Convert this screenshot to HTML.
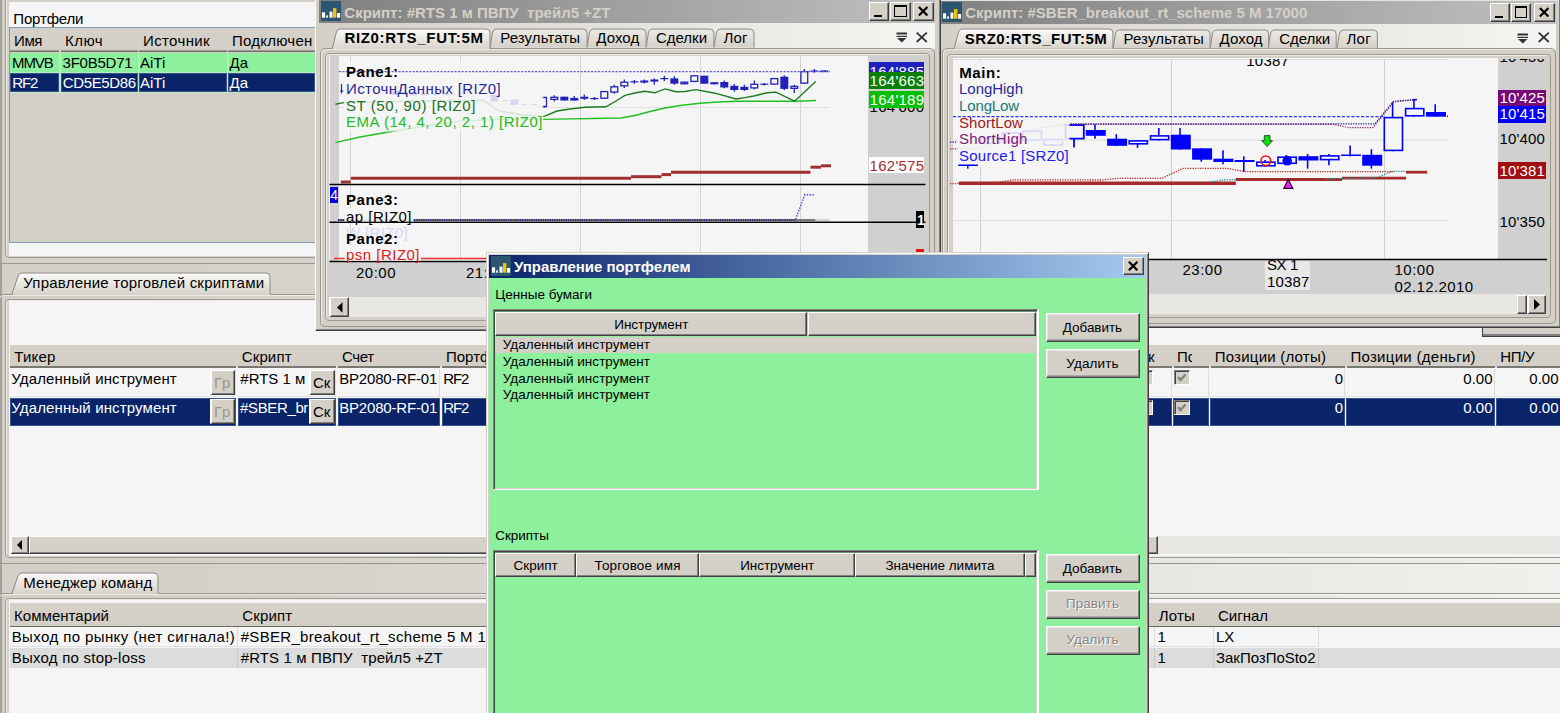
<!DOCTYPE html>
<html><head><meta charset="utf-8"><title>ui</title><style>
html,body{margin:0;padding:0;}
body{width:1560px;height:713px;overflow:hidden;background:linear-gradient(to right,#d4d0c8 0%,#d6d2ca 20%,#f1f0ed 100%);position:relative;font-family:"Liberation Sans",sans-serif;}
div,span.t,svg{position:absolute;box-sizing:border-box;}
span.t{white-space:pre;line-height:normal;}
.clip{overflow:hidden;}
</style></head><body>
<div style="left:0px;top:0px;width:2px;height:713px;background:#a5a29c;"></div>
<div style="left:-2px;top:-10px;width:322px;height:274px;border:1.6px solid #98958f;border-radius:5px;box-shadow:inset 1px 1px 0 rgba(255,255,255,.55);"></div>
<div style="left:5px;top:-10px;width:313px;height:268px;border:1.6px solid #9e9b95;border-radius:4px;box-shadow:inset 1px 1px 0 rgba(255,255,255,.55);"></div>
<div style="left:9px;top:2px;width:306px;height:254px;background:#f5f5f5;"></div>
<span class="t" style="left:13.30px;top:10.22px;font-size:15px;color:#000;letter-spacing:-0.166px;">Портфели</span>
<div style="left:9px;top:27px;width:307px;height:216px;background:#d4d0c8;border:1px solid #7f9db9;"></div>
<span class="t" style="left:14.00px;top:32.02px;font-size:15px;color:#000;letter-spacing:-0.405px;">Имя</span>
<div style="left:10px;top:50px;width:49px;height:1px;background:#9d9a94;"></div>
<div style="left:10px;top:51px;width:49px;height:1px;background:#6e6c68;"></div>
<span class="t" style="left:65.00px;top:32.02px;font-size:15px;color:#000;letter-spacing:0.443px;">Ключ</span>
<div style="left:61px;top:50px;width:77px;height:1px;background:#9d9a94;"></div>
<div style="left:61px;top:51px;width:77px;height:1px;background:#6e6c68;"></div>
<span class="t" style="left:143.00px;top:32.02px;font-size:15px;color:#000;letter-spacing:0.370px;">Источник</span>
<div style="left:139px;top:50px;width:88px;height:1px;background:#9d9a94;"></div>
<div style="left:139px;top:51px;width:88px;height:1px;background:#6e6c68;"></div>
<span class="t" style="left:232.00px;top:32.02px;font-size:15px;color:#000;letter-spacing:0.234px;">Подключен</span>
<div style="left:228px;top:50px;width:87px;height:1px;background:#9d9a94;"></div>
<div style="left:228px;top:51px;width:87px;height:1px;background:#6e6c68;"></div>
<div style="left:10px;top:53px;width:305px;height:19px;background:#8cf09c;"></div>
<div style="left:59px;top:53px;width:2px;height:19px;background:#a8f5b4;"></div>
<div style="left:138px;top:53px;width:2px;height:19px;background:#a8f5b4;"></div>
<div style="left:227px;top:53px;width:2px;height:19px;background:#a8f5b4;"></div>
<span class="t" style="left:12.00px;top:53.92px;font-size:15px;color:#000;letter-spacing:-1.101px;">MMVB</span>
<span class="t" style="left:62.50px;top:53.92px;font-size:15px;color:#000;letter-spacing:-0.214px;">3F0B5D71</span>
<span class="t" style="left:140.00px;top:53.92px;font-size:15px;color:#000;">AiTi</span>
<span class="t" style="left:229.50px;top:53.92px;font-size:15px;color:#000;">Да</span>
<div style="left:10px;top:72px;width:305px;height:20.8px;background:#b4efc0;"></div>
<div style="left:10px;top:73px;width:49px;height:19px;background:#0a246a;border:1px solid #3c5290;"></div>
<div style="left:61px;top:73px;width:77px;height:19px;background:#0a246a;border:1px solid #3c5290;"></div>
<div style="left:139px;top:73px;width:88px;height:19px;background:#0a246a;border:1px solid #3c5290;"></div>
<div style="left:228px;top:73px;width:87px;height:19px;background:#0a246a;border:1px solid #3c5290;"></div>
<span class="t" style="left:12.30px;top:73.83px;font-size:15px;color:#fff;letter-spacing:-1.113px;">RF2</span>
<span class="t" style="left:62.80px;top:73.83px;font-size:15px;color:#fff;letter-spacing:-0.359px;">CD5E5D86</span>
<span class="t" style="left:140.00px;top:73.83px;font-size:15px;color:#fff;">AiTi</span>
<span class="t" style="left:229.50px;top:73.83px;font-size:15px;color:#fff;">Да</span>
<div style="left:-2px;top:294px;width:1580px;height:269.7px;border:1.6px solid #98958f;border-radius:5px;box-shadow:inset 1px 1px 0 rgba(255,255,255,.55);"></div>
<div style="left:5px;top:299px;width:1571px;height:259.3px;border:1.6px solid #9e9b95;border-radius:4px;box-shadow:inset 1px 1px 0 rgba(255,255,255,.55);"></div>
<div style="left:9px;top:301px;width:1551px;height:254.6px;background:#f5f5f5;"></div>
<svg style="left:11px;top:272px" width="261" height="24" viewBox="-1 -1 261 24"><defs><linearGradient id="tg" x1="0" y1="0" x2="0" y2="1"><stop offset="0" stop-color="#fafaf9"/><stop offset="1" stop-color="#d8d4cc"/></linearGradient></defs><path d="M0 21 L6 3 Q7 0 10 0 L254 0 Q258 0 258 4 L258 21 Z" fill="url(#tg)" stroke="none"/><path d="M0 21 L6 3 Q7 0 10 0 L254 0 Q258 0 258 4 L258 21" fill="none" stroke="#8c8984" stroke-width="1"/></svg>
<span class="t" style="left:23.30px;top:273.93px;font-size:15px;color:#000;letter-spacing:0.222px;">Управление торговлей скриптами</span>
<div style="left:13px;top:294px;width:257px;height:1px;background:#d4d0c8;"></div>
<div style="left:10px;top:345px;width:1550px;height:22px;background:#d4d0c8;"></div>
<div style="left:10px;top:366.3px;width:1550px;height:1.7px;background:#7a7873;"></div>
<div style="left:236px;top:366px;width:2px;height:2px;background:#e4e2de;"></div>
<div style="left:336px;top:366px;width:2px;height:2px;background:#e4e2de;"></div>
<div style="left:440px;top:366px;width:2px;height:2px;background:#e4e2de;"></div>
<div style="left:1172px;top:366px;width:2px;height:2px;background:#e4e2de;"></div>
<div style="left:1209px;top:366px;width:2px;height:2px;background:#e4e2de;"></div>
<div style="left:1345px;top:366px;width:2px;height:2px;background:#e4e2de;"></div>
<div style="left:1495px;top:366px;width:2px;height:2px;background:#e4e2de;"></div>
<span class="t" style="left:14.20px;top:348.43px;font-size:15px;color:#000;letter-spacing:0.240px;">Тикер</span>
<span class="t" style="left:241.70px;top:348.43px;font-size:15px;color:#000;letter-spacing:0.148px;">Скрипт</span>
<span class="t" style="left:342.00px;top:348.43px;font-size:15px;color:#000;letter-spacing:-0.374px;">Счет</span>
<span class="t" style="left:446.00px;top:348.43px;font-size:15px;color:#000;">Портфель</span>
<div style="left:10px;top:369px;width:226px;height:28px;background:#f5f5f5;border-right:1px solid #dcdcdc;border-bottom:1px solid #e4e4e4;"></div>
<div style="left:238px;top:369px;width:98px;height:28px;background:#f5f5f5;border-right:1px solid #dcdcdc;border-bottom:1px solid #e4e4e4;"></div>
<div style="left:338px;top:369px;width:102px;height:28px;background:#f5f5f5;border-right:1px solid #dcdcdc;border-bottom:1px solid #e4e4e4;"></div>
<div style="left:442px;top:369px;width:730px;height:28px;background:#f5f5f5;border-right:1px solid #dcdcdc;border-bottom:1px solid #e4e4e4;"></div>
<div style="left:1173px;top:369px;width:36px;height:28px;background:#f5f5f5;border-right:1px solid #dcdcdc;border-bottom:1px solid #e4e4e4;"></div>
<div style="left:1210px;top:369px;width:135px;height:28px;background:#f5f5f5;border-right:1px solid #dcdcdc;border-bottom:1px solid #e4e4e4;"></div>
<div style="left:1346px;top:369px;width:149px;height:28px;background:#f5f5f5;border-right:1px solid #dcdcdc;border-bottom:1px solid #e4e4e4;"></div>
<div style="left:1496px;top:369px;width:66px;height:28px;background:#f5f5f5;border-right:1px solid #dcdcdc;border-bottom:1px solid #e4e4e4;"></div>
<div style="left:10px;top:398px;width:226px;height:28px;background:#0a246a;border:1px solid #3c5290;"></div>
<div style="left:238px;top:398px;width:98px;height:28px;background:#0a246a;border:1px solid #3c5290;"></div>
<div style="left:338px;top:398px;width:102px;height:28px;background:#0a246a;border:1px solid #3c5290;"></div>
<div style="left:442px;top:398px;width:730px;height:28px;background:#0a246a;border:1px solid #3c5290;"></div>
<div style="left:1173px;top:398px;width:36px;height:28px;background:#0a246a;border:1px solid #3c5290;"></div>
<div style="left:1210px;top:398px;width:135px;height:28px;background:#0a246a;border:1px solid #3c5290;"></div>
<div style="left:1346px;top:398px;width:149px;height:28px;background:#0a246a;border:1px solid #3c5290;"></div>
<div style="left:1496px;top:398px;width:66px;height:28px;background:#0a246a;border:1px solid #3c5290;"></div>
<span class="t" style="left:11.30px;top:370.43px;font-size:15px;color:#000;letter-spacing:0.140px;">Удаленный инструмент</span>
<span class="t" style="left:339.20px;top:370.43px;font-size:15px;color:#000;letter-spacing:-0.171px;">BP2080-RF-01</span>
<span class="t" style="left:443.30px;top:370.43px;font-size:15px;color:#000;letter-spacing:-1.113px;">RF2</span>
<span class="t" style="left:11.30px;top:399.43px;font-size:15px;color:#fff;letter-spacing:0.140px;">Удаленный инструмент</span>
<span class="t" style="left:339.20px;top:399.43px;font-size:15px;color:#fff;letter-spacing:-0.171px;">BP2080-RF-01</span>
<span class="t" style="left:443.30px;top:399.43px;font-size:15px;color:#fff;letter-spacing:-1.113px;">RF2</span>
<span class="t" style="left:240.30px;top:370.43px;font-size:15px;color:#000;letter-spacing:-0.008px;">#RTS 1 м</span>
<span class="t" style="left:240.00px;top:399.43px;font-size:15px;color:#fff;letter-spacing:-0.359px;">#SBER_br</span>
<div style="left:210px;top:370px;width:25px;height:25px;background:#d4d0c8;border:1px solid;border-color:#fff #404040 #404040 #fff;border-left-width:2px;border-top-width:1.6px;box-shadow:inset -1px -1px 0 #808080;"></div>
<span class="t" style="left:214.00px;top:374.43px;font-size:15px;color:#9a968f;letter-spacing:0.689px;">Гр</span>
<div style="left:309px;top:370px;width:26px;height:25px;background:#d4d0c8;border:1px solid;border-color:#fff #404040 #404040 #fff;border-left-width:2px;border-top-width:1.6px;box-shadow:inset -1px -1px 0 #808080;"></div>
<span class="t" style="left:313.00px;top:374.43px;font-size:15px;color:#000;letter-spacing:-0.198px;">Ск</span>
<div style="left:210px;top:399px;width:25px;height:25px;background:#d4d0c8;border:1px solid;border-color:#fff #404040 #404040 #fff;border-left-width:2px;border-top-width:1.6px;box-shadow:inset -1px -1px 0 #808080;"></div>
<span class="t" style="left:214.00px;top:403.43px;font-size:15px;color:#9a968f;letter-spacing:0.689px;">Гр</span>
<div style="left:309px;top:399px;width:26px;height:25px;background:#d4d0c8;border:1px solid;border-color:#fff #404040 #404040 #fff;border-left-width:2px;border-top-width:1.6px;box-shadow:inset -1px -1px 0 #808080;"></div>
<span class="t" style="left:313.00px;top:403.43px;font-size:15px;color:#000;letter-spacing:-0.198px;">Ск</span>
<span class="t" style="left:1334.66px;top:370.43px;font-size:15px;color:#000;">0</span>
<span class="t" style="left:1463.31px;top:370.43px;font-size:15px;color:#000;">0.00</span>
<span class="t" style="left:1529.31px;top:370.43px;font-size:15px;color:#000;">0.00</span>
<span class="t" style="left:1334.66px;top:399.43px;font-size:15px;color:#fff;">0</span>
<span class="t" style="left:1463.31px;top:399.43px;font-size:15px;color:#fff;">0.00</span>
<span class="t" style="left:1529.31px;top:399.43px;font-size:15px;color:#fff;">0.00</span>
<span class="t" style="left:1148.00px;top:348.43px;font-size:15px;color:#000;">к</span>
<div class="clip" style="left:1177px;top:345px;width:15px;height:22px"><span class="t" style="left:0;top:3.4px;font-size:15px">По</span></div>
<span class="t" style="left:1214.70px;top:348.43px;font-size:15px;color:#000;letter-spacing:0.228px;">Позиции (лоты)</span>
<span class="t" style="left:1350.40px;top:348.43px;font-size:15px;color:#000;letter-spacing:0.296px;">Позиции (деньги)</span>
<span class="t" style="left:1500.30px;top:348.43px;font-size:15px;color:#000;letter-spacing:-0.327px;">НП/У</span>
<div style="left:1174.2px;top:370.3px;width:15.5px;height:15px;background:#d4d0c8;border:1px solid;border-color:#808080 #fff #fff #808080;box-shadow:inset 1px 1px 0 #404040;"></div>
<svg style="left:1177.2px;top:373.3px" width="10" height="10"><path d="M1 4 L3.5 7 L8.5 1.5" stroke="#808080" stroke-width="2.3" fill="none"/></svg>
<div style="left:1174.2px;top:400px;width:15.5px;height:15px;background:#d4d0c8;border:1px solid;border-color:#808080 #fff #fff #808080;box-shadow:inset 1px 1px 0 #404040;"></div>
<svg style="left:1177.2px;top:403px" width="10" height="10"><path d="M1 4 L3.5 7 L8.5 1.5" stroke="#808080" stroke-width="2.3" fill="none"/></svg>
<div style="left:1137px;top:370px;width:15.5px;height:15px;background:#d4d0c8;border:1px solid;border-color:#808080 #fff #fff #808080;box-shadow:inset 1px 1px 0 #404040;"></div>
<svg style="left:1140px;top:373px" width="10" height="10"><path d="M1 4 L3.5 7 L8.5 1.5" stroke="#808080" stroke-width="2.3" fill="none"/></svg>
<div style="left:1137px;top:400px;width:15.5px;height:15px;background:#d4d0c8;border:1px solid;border-color:#808080 #fff #fff #808080;box-shadow:inset 1px 1px 0 #404040;"></div>
<svg style="left:1140px;top:403px" width="10" height="10"><path d="M1 4 L3.5 7 L8.5 1.5" stroke="#808080" stroke-width="2.3" fill="none"/></svg>
<div style="left:1482.2px;top:326px;width:80px;height:10.8px;background:#d4d0c8;border-left:1.2px solid #404040;border-bottom:1px solid #404040;box-shadow:inset 0 -2px 0 #808080;"></div>
<div style="left:10px;top:535.5px;width:1550px;height:18.2px;background:#e9e7e3;"></div>
<div style="left:29px;top:535.5px;width:1129px;height:18.2px;background:#d4d0c8;border:1px solid;border-color:#fff #404040 #404040 #fff;box-shadow:inset -1px -1px 0 #808080;"></div>
<div style="left:10px;top:535.5px;width:19.3px;height:18.2px;background:#d4d0c8;border:1px solid;border-color:#fff #404040 #404040 #fff;border-left-width:2px;border-top-width:1.6px;box-shadow:inset -1px -1px 0 #808080;"></div>
<svg style="left:15.5px;top:539.6px" width="8" height="10"><path d="M6 0 L6 10 L1 5 Z" fill="#000"/></svg>
<div style="left:-2px;top:593px;width:1580px;height:140px;border:1.6px solid #98958f;border-radius:5px;box-shadow:inset 1px 1px 0 rgba(255,255,255,.55);"></div>
<div style="left:5px;top:598.4px;width:1571px;height:140px;border:1.6px solid #9e9b95;border-radius:4px;box-shadow:inset 1px 1px 0 rgba(255,255,255,.55);"></div>
<div style="left:9px;top:600.4px;width:1551px;height:120px;background:#f5f5f5;"></div>
<svg style="left:11px;top:572px" width="149" height="23" viewBox="-1 -1 149 23"><defs><linearGradient id="tg" x1="0" y1="0" x2="0" y2="1"><stop offset="0" stop-color="#fafaf9"/><stop offset="1" stop-color="#d8d4cc"/></linearGradient></defs><path d="M0 20 L6 3 Q7 0 10 0 L142 0 Q146 0 146 4 L146 20 Z" fill="url(#tg)" stroke="none"/><path d="M0 20 L6 3 Q7 0 10 0 L142 0 Q146 0 146 4 L146 20" fill="none" stroke="#8c8984" stroke-width="1"/></svg>
<span class="t" style="left:23.30px;top:574.12px;font-size:15px;color:#000;letter-spacing:0.086px;">Менеджер команд</span>
<div style="left:13px;top:593px;width:145px;height:1px;background:#d4d0c8;"></div>
<div style="left:10px;top:603px;width:1550px;height:23px;background:#d4d0c8;"></div>
<div style="left:10px;top:625.6px;width:1550px;height:1.5px;background:#6e6c68;"></div>
<span class="t" style="left:14.00px;top:606.82px;font-size:15px;color:#000;letter-spacing:0.048px;">Комментарий</span>
<span class="t" style="left:242.30px;top:606.82px;font-size:15px;color:#000;letter-spacing:0.148px;">Скрипт</span>
<span class="t" style="left:1158.80px;top:606.82px;font-size:15px;color:#000;letter-spacing:0.123px;">Лоты</span>
<span class="t" style="left:1218.00px;top:606.82px;font-size:15px;color:#000;letter-spacing:-0.010px;">Сигнал</span>
<div style="left:10px;top:627px;width:1550px;height:20px;background:#f5f5f5;"></div>
<div style="left:10px;top:648px;width:1550px;height:20px;background:#dcdcdc;"></div>
<div style="left:237px;top:627px;width:1px;height:20px;background:#dcdcdc;"></div>
<div style="left:237px;top:648px;width:1px;height:20px;background:#c8c8c8;"></div>
<div style="left:1154px;top:627px;width:1px;height:20px;background:#dcdcdc;"></div>
<div style="left:1154px;top:648px;width:1px;height:20px;background:#c8c8c8;"></div>
<div style="left:1213px;top:627px;width:1px;height:20px;background:#dcdcdc;"></div>
<div style="left:1213px;top:648px;width:1px;height:20px;background:#c8c8c8;"></div>
<div style="left:1318px;top:627px;width:1px;height:20px;background:#dcdcdc;"></div>
<div style="left:1318px;top:648px;width:1px;height:20px;background:#c8c8c8;"></div>
<div style="left:10px;top:646px;width:1308px;height:1px;background:#e0e0e0;"></div>
<span class="t" style="left:11.70px;top:628.12px;font-size:15px;color:#000;letter-spacing:0.400px;">Выход по рынку (нет сигнала!)</span>
<span class="t" style="left:11.70px;top:649.12px;font-size:15px;color:#000;letter-spacing:0.239px;">Выход по stop-loss</span>
<span class="t" style="left:240.70px;top:628.12px;font-size:15px;color:#000;letter-spacing:0.314px;">#SBER_breakout_rt_scheme 5 M 17000</span>
<span class="t" style="left:240.70px;top:649.12px;font-size:15px;color:#000;letter-spacing:0.122px;">#RTS 1 м ПВПУ  трейл5 +ZT</span>
<span class="t" style="left:1157.50px;top:628.12px;font-size:15px;color:#000;">1</span>
<span class="t" style="left:1157.50px;top:649.12px;font-size:15px;color:#000;">1</span>
<span class="t" style="left:1216.00px;top:628.12px;font-size:15px;color:#000;">LX</span>
<span class="t" style="left:1216.00px;top:649.12px;font-size:15px;color:#000;letter-spacing:-0.023px;">ЗакПозПоSto2</span>
<div style="left:937.5px;top:-2px;width:623.0px;height:329.8px;background:#d4d0c8;border:1.3px solid;border-color:#fff #404040 #404040 #fbfbfb;border-left-width:1.9px;box-shadow:inset -1px -1px 0 #808080;"></div>
<div style="left:938.8px;top:0px;width:619.2px;height:0.9px;background:#e6e4df;"></div>
<div style="left:940.8px;top:0.9px;width:615.2px;height:22.8px;background:linear-gradient(to right,#808080,#c0c0c0);"></div>
<svg style="left:942px;top:1.8px" width="20" height="20" viewBox="0 0 20 20"><rect width="20" height="20" fill="#2b5570"/><rect x="1" y="11.3" width="3.1" height="5.4" fill="#fff"/><rect x="5.1" y="14.4" width="1.8" height="2.3" fill="#fff"/><rect x="8.5" y="10.6" width="3" height="6.1" fill="#fff"/><rect x="12" y="7.1" width="3.4" height="9.6" fill="#f5c400"/><rect x="16.1" y="12" width="3" height="4.7" fill="#fff"/></svg>
<span class="t" style="left:965.30px;top:4.42px;font-size:15px;color:#d4d0c8;letter-spacing:-0.011px;font-weight:bold;">Скрипт: #SBER_breakout_rt_scheme 5 M 17000</span>
<div style="left:1490px;top:2.8px;width:19.5px;height:19px;background:#d4d0c8;border:1px solid;border-color:#fff #404040 #404040 #fff;box-shadow:inset -1px -1px 0 #808080;"></div>
<div style="left:1495px;top:15.8px;width:8px;height:2.5px;background:#000;"></div>
<div style="left:1510.9px;top:2.8px;width:20.5px;height:19px;background:#d4d0c8;border:1px solid;border-color:#fff #404040 #404040 #fff;box-shadow:inset -1px -1px 0 #808080;"></div>
<div style="left:1514.9px;top:5.8px;width:12.5px;height:12px;border:1px solid #000;border-top:2.5px solid #000;"></div>
<div style="left:1533.8px;top:2.8px;width:20.8px;height:19px;background:#d4d0c8;border:1px solid;border-color:#fff #404040 #404040 #fff;box-shadow:inset -1px -1px 0 #808080;"></div>
<svg style="left:1533.8px;top:2.8px" width="20.8" height="19"><path d="M5.9 5.0 L14.4 13.5 M14.4 5.0 L5.9 13.5" stroke="#000" stroke-width="2.2" fill="none"/></svg>
<div style="left:940.8px;top:23.7px;width:615.2px;height:26px;background:linear-gradient(to right,#d4d0c8 0%,#f5f5f3 100%);"></div>
<div style="left:941.8px;top:48.44px;width:613.9000000000001px;height:275.36px;background:#d4d0c8;border:1.6px solid #98958f;border-radius:5px;box-shadow:inset 1px 1px 0 rgba(255,255,255,.55);"></div>
<div style="left:946.8px;top:53.54px;width:603.9000000000001px;height:264.26px;background:#d4d0c8;border:1.6px solid #9e9b95;border-radius:4px;box-shadow:inset 1px 1px 0 rgba(255,255,255,.55);"></div>
<svg style="left:1335.5px;top:29.299999999999997px" width="43.40000000000009" height="21.14" viewBox="-1 -1 43.40000000000009 21.14"><defs><linearGradient id="tga" x1="0" y1="0" x2="0" y2="1"><stop offset="0" stop-color="#fbfbfa"/><stop offset="1" stop-color="#d8d4cc"/></linearGradient><linearGradient id="tgi" x1="0" y1="0" x2="0" y2="1"><stop offset="0" stop-color="#eceae6"/><stop offset="1" stop-color="#d4d0c8"/></linearGradient></defs><path d="M0 18.14 L2.6 3 Q3.6 0 6.6 0 L36.40000000000009 0 Q40.40000000000009 0 40.40000000000009 4 L40.40000000000009 18.14 Z" fill="url(#tgi)" stroke="none"/><path d="M0 18.14 L2.6 3 Q3.6 0 6.6 0 L36.40000000000009 0 Q40.40000000000009 0 40.40000000000009 4 L40.40000000000009 18.14" fill="none" stroke="#8c8984" stroke-width="1"/></svg>
<span class="t" style="left:1346.50px;top:30.02px;font-size:15px;color:#000;letter-spacing:0.281px;">Лог</span>
<svg style="left:1267.3px;top:29.299999999999997px" width="71.20000000000005" height="21.14" viewBox="-1 -1 71.20000000000005 21.14"><defs><linearGradient id="tga" x1="0" y1="0" x2="0" y2="1"><stop offset="0" stop-color="#fbfbfa"/><stop offset="1" stop-color="#d8d4cc"/></linearGradient><linearGradient id="tgi" x1="0" y1="0" x2="0" y2="1"><stop offset="0" stop-color="#eceae6"/><stop offset="1" stop-color="#d4d0c8"/></linearGradient></defs><path d="M0 18.14 L2.6 3 Q3.6 0 6.6 0 L64.20000000000005 0 Q68.20000000000005 0 68.20000000000005 4 L68.20000000000005 18.14 Z" fill="url(#tgi)" stroke="none"/><path d="M0 18.14 L2.6 3 Q3.6 0 6.6 0 L64.20000000000005 0 Q68.20000000000005 0 68.20000000000005 4 L68.20000000000005 18.14" fill="none" stroke="#8c8984" stroke-width="1"/></svg>
<span class="t" style="left:1279.20px;top:30.02px;font-size:15px;color:#000;letter-spacing:-0.021px;">Сделки</span>
<svg style="left:1208.6px;top:29.299999999999997px" width="61.700000000000045" height="21.14" viewBox="-1 -1 61.700000000000045 21.14"><defs><linearGradient id="tga" x1="0" y1="0" x2="0" y2="1"><stop offset="0" stop-color="#fbfbfa"/><stop offset="1" stop-color="#d8d4cc"/></linearGradient><linearGradient id="tgi" x1="0" y1="0" x2="0" y2="1"><stop offset="0" stop-color="#eceae6"/><stop offset="1" stop-color="#d4d0c8"/></linearGradient></defs><path d="M0 18.14 L2.6 3 Q3.6 0 6.6 0 L54.700000000000045 0 Q58.700000000000045 0 58.700000000000045 4 L58.700000000000045 18.14 Z" fill="url(#tgi)" stroke="none"/><path d="M0 18.14 L2.6 3 Q3.6 0 6.6 0 L54.700000000000045 0 Q58.700000000000045 0 58.700000000000045 4 L58.700000000000045 18.14" fill="none" stroke="#8c8984" stroke-width="1"/></svg>
<span class="t" style="left:1219.60px;top:30.02px;font-size:15px;color:#000;letter-spacing:0.080px;">Доход</span>
<svg style="left:1111.5px;top:29.299999999999997px" width="100.09999999999991" height="21.14" viewBox="-1 -1 100.09999999999991 21.14"><defs><linearGradient id="tga" x1="0" y1="0" x2="0" y2="1"><stop offset="0" stop-color="#fbfbfa"/><stop offset="1" stop-color="#d8d4cc"/></linearGradient><linearGradient id="tgi" x1="0" y1="0" x2="0" y2="1"><stop offset="0" stop-color="#eceae6"/><stop offset="1" stop-color="#d4d0c8"/></linearGradient></defs><path d="M0 18.14 L2.6 3 Q3.6 0 6.6 0 L93.09999999999991 0 Q97.09999999999991 0 97.09999999999991 4 L97.09999999999991 18.14 Z" fill="url(#tgi)" stroke="none"/><path d="M0 18.14 L2.6 3 Q3.6 0 6.6 0 L93.09999999999991 0 Q97.09999999999991 0 97.09999999999991 4 L97.09999999999991 18.14" fill="none" stroke="#8c8984" stroke-width="1"/></svg>
<span class="t" style="left:1123.50px;top:30.02px;font-size:15px;color:#000;letter-spacing:0.130px;">Результаты</span>
<svg style="left:952.5px;top:28.4px" width="162.0" height="22.64" viewBox="-1 -1 162.0 22.64"><defs><linearGradient id="tga" x1="0" y1="0" x2="0" y2="1"><stop offset="0" stop-color="#fbfbfa"/><stop offset="1" stop-color="#d8d4cc"/></linearGradient><linearGradient id="tgi" x1="0" y1="0" x2="0" y2="1"><stop offset="0" stop-color="#eceae6"/><stop offset="1" stop-color="#d4d0c8"/></linearGradient></defs><path d="M0 19.64 L4.5 3 Q5.5 0 8.5 0 L155.0 0 Q159.0 0 159.0 4 L159.0 19.64 Z" fill="url(#tga)" stroke="none"/><path d="M0 19.64 L4.5 3 Q5.5 0 8.5 0 L155.0 0 Q159.0 0 159.0 4 L159.0 19.64" fill="none" stroke="#8c8984" stroke-width="1"/></svg>
<span class="t" style="left:964.80px;top:30.02px;font-size:15px;color:#000;letter-spacing:0.499px;font-weight:bold;">SRZ0:RTS_FUT:5M</span>
<svg style="left:1517px;top:32.9px" width="12" height="11"><rect x="0.5" y="0.5" width="10.5" height="2" fill="#333"/><rect x="0.5" y="3.8" width="10.5" height="1.2" fill="#333"/><path d="M1 6 L10.5 6 L5.75 10.5 Z" fill="#333"/></svg>
<svg style="left:1538px;top:32.4px" width="12" height="11"><path d="M0.7 0.7 L10.8 10 M10.8 0.7 L0.7 10" stroke="#333" stroke-width="1.8" fill="none"/></svg>
<div style="left:315.4px;top:-2px;width:625.2px;height:332.8px;background:#d4d0c8;border:1.3px solid;border-color:#fff #404040 #404040 #fbfbfb;border-left-width:1.9px;box-shadow:inset -1px -1px 0 #808080;"></div>
<div style="left:319.3px;top:0px;width:615.8px;height:22.8px;background:linear-gradient(to right,#808080,#c0c0c0);"></div>
<svg style="left:321px;top:0.9px" width="20" height="20" viewBox="0 0 20 20"><rect width="20" height="20" fill="#2b5570"/><rect x="1" y="11.3" width="3.1" height="5.4" fill="#fff"/><rect x="5.1" y="14.4" width="1.8" height="2.3" fill="#fff"/><rect x="8.5" y="10.6" width="3" height="6.1" fill="#fff"/><rect x="12" y="7.1" width="3.4" height="9.6" fill="#f5c400"/><rect x="16.1" y="12" width="3" height="4.7" fill="#fff"/></svg>
<span class="t" style="left:344.30px;top:3.53px;font-size:15px;color:#d4d0c8;letter-spacing:0.005px;font-weight:bold;">Скрипт: #RTS 1 м ПВПУ  трейл5 +ZT</span>
<div style="left:869.1px;top:1.9px;width:19.5px;height:19px;background:#d4d0c8;border:1px solid;border-color:#fff #404040 #404040 #fff;box-shadow:inset -1px -1px 0 #808080;"></div>
<div style="left:874.1px;top:14.899999999999999px;width:8px;height:2.5px;background:#000;"></div>
<div style="left:890.0px;top:1.9px;width:20.5px;height:19px;background:#d4d0c8;border:1px solid;border-color:#fff #404040 #404040 #fff;box-shadow:inset -1px -1px 0 #808080;"></div>
<div style="left:894.0px;top:4.9px;width:12.5px;height:12px;border:1px solid #000;border-top:2.5px solid #000;"></div>
<div style="left:912.9px;top:1.9px;width:20.8px;height:19px;background:#d4d0c8;border:1px solid;border-color:#fff #404040 #404040 #fff;box-shadow:inset -1px -1px 0 #808080;"></div>
<svg style="left:912.9px;top:1.9px" width="20.8" height="19"><path d="M5.9 5.0 L14.4 13.5 M14.4 5.0 L5.9 13.5" stroke="#000" stroke-width="2.2" fill="none"/></svg>
<div style="left:319.3px;top:22.8px;width:615.8px;height:26px;background:linear-gradient(to right,#d4d0c8 0%,#f5f5f3 100%);"></div>
<div style="left:320.3px;top:47.9px;width:614.5px;height:278.90000000000003px;background:#d4d0c8;border:1.6px solid #98958f;border-radius:5px;box-shadow:inset 1px 1px 0 rgba(255,255,255,.55);"></div>
<div style="left:325.3px;top:53.0px;width:604.5px;height:267.8px;background:#d4d0c8;border:1.6px solid #9e9b95;border-radius:4px;box-shadow:inset 1px 1px 0 rgba(255,255,255,.55);"></div>
<svg style="left:712.7px;top:28.4px" width="43.0" height="21.5" viewBox="-1 -1 43.0 21.5"><defs><linearGradient id="tga" x1="0" y1="0" x2="0" y2="1"><stop offset="0" stop-color="#fbfbfa"/><stop offset="1" stop-color="#d8d4cc"/></linearGradient><linearGradient id="tgi" x1="0" y1="0" x2="0" y2="1"><stop offset="0" stop-color="#eceae6"/><stop offset="1" stop-color="#d4d0c8"/></linearGradient></defs><path d="M0 18.5 L2.6 3 Q3.6 0 6.6 0 L36.0 0 Q40.0 0 40.0 4 L40.0 18.5 Z" fill="url(#tgi)" stroke="none"/><path d="M0 18.5 L2.6 3 Q3.6 0 6.6 0 L36.0 0 Q40.0 0 40.0 4 L40.0 18.5" fill="none" stroke="#8c8984" stroke-width="1"/></svg>
<span class="t" style="left:723.40px;top:29.12px;font-size:15px;color:#000;letter-spacing:0.247px;">Лог</span>
<svg style="left:644.8px;top:28.4px" width="70.90000000000009" height="21.5" viewBox="-1 -1 70.90000000000009 21.5"><defs><linearGradient id="tga" x1="0" y1="0" x2="0" y2="1"><stop offset="0" stop-color="#fbfbfa"/><stop offset="1" stop-color="#d8d4cc"/></linearGradient><linearGradient id="tgi" x1="0" y1="0" x2="0" y2="1"><stop offset="0" stop-color="#eceae6"/><stop offset="1" stop-color="#d4d0c8"/></linearGradient></defs><path d="M0 18.5 L2.6 3 Q3.6 0 6.6 0 L63.90000000000009 0 Q67.90000000000009 0 67.90000000000009 4 L67.90000000000009 18.5 Z" fill="url(#tgi)" stroke="none"/><path d="M0 18.5 L2.6 3 Q3.6 0 6.6 0 L63.90000000000009 0 Q67.90000000000009 0 67.90000000000009 4 L67.90000000000009 18.5" fill="none" stroke="#8c8984" stroke-width="1"/></svg>
<span class="t" style="left:656.00px;top:29.12px;font-size:15px;color:#000;letter-spacing:-0.021px;">Сделки</span>
<svg style="left:585.7px;top:28.4px" width="62.09999999999991" height="21.5" viewBox="-1 -1 62.09999999999991 21.5"><defs><linearGradient id="tga" x1="0" y1="0" x2="0" y2="1"><stop offset="0" stop-color="#fbfbfa"/><stop offset="1" stop-color="#d8d4cc"/></linearGradient><linearGradient id="tgi" x1="0" y1="0" x2="0" y2="1"><stop offset="0" stop-color="#eceae6"/><stop offset="1" stop-color="#d4d0c8"/></linearGradient></defs><path d="M0 18.5 L2.6 3 Q3.6 0 6.6 0 L55.09999999999991 0 Q59.09999999999991 0 59.09999999999991 4 L59.09999999999991 18.5 Z" fill="url(#tgi)" stroke="none"/><path d="M0 18.5 L2.6 3 Q3.6 0 6.6 0 L55.09999999999991 0 Q59.09999999999991 0 59.09999999999991 4 L59.09999999999991 18.5" fill="none" stroke="#8c8984" stroke-width="1"/></svg>
<span class="t" style="left:596.30px;top:29.12px;font-size:15px;color:#000;letter-spacing:0.080px;">Доход</span>
<svg style="left:488.6px;top:28.4px" width="100.10000000000002" height="21.5" viewBox="-1 -1 100.10000000000002 21.5"><defs><linearGradient id="tga" x1="0" y1="0" x2="0" y2="1"><stop offset="0" stop-color="#fbfbfa"/><stop offset="1" stop-color="#d8d4cc"/></linearGradient><linearGradient id="tgi" x1="0" y1="0" x2="0" y2="1"><stop offset="0" stop-color="#eceae6"/><stop offset="1" stop-color="#d4d0c8"/></linearGradient></defs><path d="M0 18.5 L2.6 3 Q3.6 0 6.6 0 L93.10000000000002 0 Q97.10000000000002 0 97.10000000000002 4 L97.10000000000002 18.5 Z" fill="url(#tgi)" stroke="none"/><path d="M0 18.5 L2.6 3 Q3.6 0 6.6 0 L93.10000000000002 0 Q97.10000000000002 0 97.10000000000002 4 L97.10000000000002 18.5" fill="none" stroke="#8c8984" stroke-width="1"/></svg>
<span class="t" style="left:500.20px;top:29.12px;font-size:15px;color:#000;letter-spacing:0.100px;">Результаты</span>
<svg style="left:331px;top:27.5px" width="161" height="23.0" viewBox="-1 -1 161 23.0"><defs><linearGradient id="tga" x1="0" y1="0" x2="0" y2="1"><stop offset="0" stop-color="#fbfbfa"/><stop offset="1" stop-color="#d8d4cc"/></linearGradient><linearGradient id="tgi" x1="0" y1="0" x2="0" y2="1"><stop offset="0" stop-color="#eceae6"/><stop offset="1" stop-color="#d4d0c8"/></linearGradient></defs><path d="M0 20.0 L4.5 3 Q5.5 0 8.5 0 L154 0 Q158 0 158 4 L158 20.0 Z" fill="url(#tga)" stroke="none"/><path d="M0 20.0 L4.5 3 Q5.5 0 8.5 0 L154 0 Q158 0 158 4 L158 20.0" fill="none" stroke="#8c8984" stroke-width="1"/></svg>
<span class="t" style="left:344.40px;top:29.12px;font-size:15px;color:#000;letter-spacing:0.675px;font-weight:bold;">RIZ0:RTS_FUT:5M</span>
<svg style="left:895.5px;top:32px" width="12" height="11"><rect x="0.5" y="0.5" width="10.5" height="2" fill="#333"/><rect x="0.5" y="3.8" width="10.5" height="1.2" fill="#333"/><path d="M1 6 L10.5 6 L5.75 10.5 Z" fill="#333"/></svg>
<svg style="left:916px;top:31.5px" width="12" height="11"><path d="M0.7 0.7 L10.8 10 M10.8 0.7 L0.7 10" stroke="#333" stroke-width="1.8" fill="none"/></svg>
<div style="left:329.3px;top:56px;width:596.2px;height:261px;background:#f5f5f5;"></div>
<div style="left:329.5px;top:56px;width:9px;height:206px;background:#d0d0d0;"></div>
<div style="left:868.3px;top:56px;width:57.2px;height:206px;background:#d0d0d0;"></div>
<div style="left:329.3px;top:262px;width:596.2px;height:34.8px;background:#d0d0d0;"></div>
<div style="left:329.3px;top:296.8px;width:596.2px;height:20.2px;background:#e9e7e3;"></div>
<div style="left:329.3px;top:297.3px;width:19.5px;height:19.7px;background:#d4d0c8;border:1px solid;border-color:#fff #404040 #404040 #fff;border-left-width:2px;border-top-width:1.6px;box-shadow:inset -1px -1px 0 #808080;"></div>
<svg style="left:335.5px;top:301.5px" width="8" height="11"><path d="M6.5 0.3 L6.5 10.7 L1 5.5 Z" fill="#000"/></svg>
<svg style="left:0;top:0" width="940" height="330" viewBox="0 0 940 330"><line x1="350.5" y1="56" x2="350.5" y2="262" stroke="#d4d4d4" stroke-width="1"/><line x1="460.5" y1="56" x2="460.5" y2="262" stroke="#d4d4d4" stroke-width="1"/><line x1="580.5" y1="56" x2="580.5" y2="262" stroke="#d4d4d4" stroke-width="1"/><line x1="700.5" y1="56" x2="700.5" y2="262" stroke="#d4d4d4" stroke-width="1"/><line x1="800.5" y1="56" x2="800.5" y2="262" stroke="#d4d4d4" stroke-width="1"/><line x1="339" y1="107.5" x2="830" y2="107.5" stroke="#e2e2e2" stroke-width="1"/><polyline fill="none" stroke="#22c022" stroke-width="1.4" points="335.4,142.6 360,137 400,130 463,120.7 500,119.6 543,119.4 621,118 636,115.3 650,111.5 665,108 682,105.3 700,103.2 718,102 736,101.2 795,101.2 816,100.5"/><polyline fill="none" stroke="#1e7a1e" stroke-width="1.4" points="335.4,104.3 343.4,102.6"/><polyline fill="none" stroke="#1e7a1e" stroke-width="1.4" points="544.3,116.3 557,111 570,109 585,107.3 606,106.8 616,101 625,95.3 636,92.7 645,91.2 654.7,92.8 665,88.9 676,91.8 685,91.5 696,89.6 715,93.2 736,99 745,97.6 755,95.8 767,92.8 776,92.1 794.6,101.2 815.7,81.6"/><polyline fill="none" stroke="#1e7a1e" stroke-width="1.3" points="343.4,102.6 420,101 484,100.5 499,111 520,114.5 544.3,116.3"/><line x1="554.3" y1="95.2" x2="554.3" y2="101.5" stroke="#2222bb" stroke-width="1.3"/><rect x="550.9" y="97.3" width="6.8" height="2.1" fill="#f5f5f5" stroke="#2222bb" stroke-width="1.3"/><line x1="564.3" y1="96.7" x2="564.3" y2="100.5" stroke="#2222bb" stroke-width="1.3"/><rect x="560.3" y="96.7" width="8" height="3.8" fill="#2222bb"/><line x1="574.3" y1="95.9" x2="574.3" y2="100.5" stroke="#2222bb" stroke-width="1.3"/><rect x="570.9" y="98.6" width="6.8" height="1.3" fill="#f5f5f5" stroke="#2222bb" stroke-width="1.3"/><line x1="584.3" y1="94.6" x2="584.3" y2="100" stroke="#2222bb" stroke-width="1.3"/><rect x="580.3" y="96.7" width="8" height="2.1" fill="#2222bb"/><line x1="594.3" y1="97" x2="594.3" y2="100" stroke="#2222bb" stroke-width="1.3"/><rect x="590.3" y="98" width="8" height="1.2" fill="#2222bb"/><line x1="604.3" y1="91" x2="604.3" y2="98.8" stroke="#2222bb" stroke-width="1.3"/><rect x="600.9" y="91.6" width="6.8" height="6.6" fill="#f5f5f5" stroke="#2222bb" stroke-width="1.3"/><line x1="614.3" y1="84.7" x2="614.3" y2="93.8" stroke="#2222bb" stroke-width="1.3"/><rect x="610.9" y="86.8" width="6.8" height="5.3" fill="#f5f5f5" stroke="#2222bb" stroke-width="1.3"/><line x1="624.3" y1="79.5" x2="624.3" y2="87.9" stroke="#2222bb" stroke-width="1.3"/><rect x="620.9" y="82.19999999999999" width="6.8" height="3.6" fill="#f5f5f5" stroke="#2222bb" stroke-width="1.3"/><line x1="634.3" y1="79.9" x2="634.3" y2="83.7" stroke="#2222bb" stroke-width="1.3"/><rect x="630.3" y="81.2" width="8" height="1.2" fill="#2222bb"/><line x1="644.3" y1="79.5" x2="644.3" y2="83.5" stroke="#2222bb" stroke-width="1.3"/><rect x="640.3" y="80.5" width="8" height="2.1" fill="#2222bb"/><line x1="654.3" y1="78.4" x2="654.3" y2="84.7" stroke="#2222bb" stroke-width="1.3"/><rect x="650.3" y="79.5" width="8" height="2.1" fill="#2222bb"/><line x1="664.3" y1="75.7" x2="664.3" y2="81.1" stroke="#2222bb" stroke-width="1.3"/><rect x="660.3" y="78" width="8" height="1.2" fill="#2222bb"/><line x1="674.3" y1="76.3" x2="674.3" y2="84.7" stroke="#2222bb" stroke-width="1.3"/><rect x="670.3" y="78.4" width="8" height="5.3" fill="#2222bb"/><line x1="684.3" y1="81.6" x2="684.3" y2="84.3" stroke="#2222bb" stroke-width="1.3"/><rect x="680.9" y="82.19999999999999" width="6.8" height="1.5" fill="#f5f5f5" stroke="#2222bb" stroke-width="1.3"/><line x1="694.3" y1="75.2" x2="694.3" y2="82" stroke="#2222bb" stroke-width="1.3"/><rect x="690.9" y="75.8" width="6.8" height="5.6" fill="#f5f5f5" stroke="#2222bb" stroke-width="1.3"/><line x1="704.3" y1="75.7" x2="704.3" y2="83.7" stroke="#2222bb" stroke-width="1.3"/><rect x="700.3" y="75.7" width="8" height="8.0" fill="#2222bb"/><line x1="714.3" y1="82.2" x2="714.3" y2="84.3" stroke="#2222bb" stroke-width="1.3"/><rect x="710.3" y="82.2" width="8" height="2.1" fill="#2222bb"/><line x1="724.3" y1="80.5" x2="724.3" y2="88.3" stroke="#2222bb" stroke-width="1.3"/><rect x="720.3" y="82" width="8" height="5.5" fill="#2222bb"/><line x1="734.3" y1="84.1" x2="734.3" y2="91.7" stroke="#2222bb" stroke-width="1.3"/><rect x="730.3" y="85.8" width="8" height="4.2" fill="#2222bb"/><line x1="744.3" y1="84.7" x2="744.3" y2="91" stroke="#2222bb" stroke-width="1.3"/><rect x="740.3" y="86.8" width="8" height="3.2" fill="#2222bb"/><line x1="754.3" y1="80.5" x2="754.3" y2="89.6" stroke="#2222bb" stroke-width="1.3"/><rect x="750.9" y="84.3" width="6.8" height="3.6" fill="#f5f5f5" stroke="#2222bb" stroke-width="1.3"/><line x1="764.3" y1="83" x2="764.3" y2="85.5" stroke="#2222bb" stroke-width="1.3"/><rect x="760.3" y="83.6" width="8" height="1.2" fill="#2222bb"/><line x1="774.3" y1="78" x2="774.3" y2="84.7" stroke="#2222bb" stroke-width="1.3"/><rect x="770.9" y="78.6" width="6.8" height="5.5" fill="#f5f5f5" stroke="#2222bb" stroke-width="1.3"/><line x1="784.3" y1="75.2" x2="784.3" y2="90" stroke="#2222bb" stroke-width="1.3"/><rect x="780.3" y="76.7" width="8" height="12.2" fill="#2222bb"/><line x1="794.3" y1="84.7" x2="794.3" y2="93.1" stroke="#2222bb" stroke-width="1.3"/><rect x="790.9" y="86.39999999999999" width="6.8" height="1.9" fill="#f5f5f5" stroke="#2222bb" stroke-width="1.3"/><line x1="804.3" y1="68.9" x2="804.3" y2="83.7" stroke="#2222bb" stroke-width="1.3"/><rect x="800.9" y="71.6" width="6.8" height="11.5" fill="#f5f5f5" stroke="#2222bb" stroke-width="1.3"/><line x1="814.3" y1="68.9" x2="814.3" y2="72.7" stroke="#2222bb" stroke-width="1.3"/><rect x="810.3" y="70.5" width="8" height="1.2" fill="#2222bb"/><line x1="824.3" y1="70.4" x2="824.3" y2="72.1" stroke="#2222bb" stroke-width="1.3"/><rect x="820.3" y="70.4" width="8" height="1.7" fill="#2222bb"/><path d="M541 97.5 L546.5 97.5 L546.5 106.5 L541 106.5 M544 106 L544 108" fill="none" stroke="#2222bb" stroke-width="1.3"/><rect x="390" y="91" width="9" height="4" fill="#2222bb"/><rect x="403" y="93" width="4" height="1.3" fill="#2222bb"/><rect x="409" y="92" width="8" height="3.5" fill="#2222bb"/><rect x="421" y="93" width="8" height="2.5" fill="#2222bb"/><rect x="433" y="94" width="6" height="1.3" fill="#2222bb"/><rect x="443" y="94" width="6" height="1.3" fill="#2222bb"/><rect x="490.5" y="95" width="8" height="6.5" fill="#2222bb"/><rect x="503" y="100" width="5" height="1.3" fill="#2222bb"/><rect x="510.5" y="99.5" width="8" height="5.5" fill="#2222bb"/><rect x="522" y="104" width="5" height="1.3" fill="#2222bb"/><rect x="532" y="104" width="5" height="1.3" fill="#2222bb"/><rect x="344" y="62" width="199.3" height="69.5" fill="#f5f5f5" fill-opacity="0.86"/><path d="M340 91 L343.5 91 M341.5 84 L341.5 93.5" stroke="#2222bb" stroke-width="1.2" fill="none"/><line x1="339" y1="71.6" x2="830" y2="71.6" stroke="#6060cc" stroke-width="1.3" stroke-dasharray="2.2 1.3"/><line x1="340.8" y1="182" x2="350.7" y2="182" stroke="#a03030" stroke-width="3"/><line x1="350.7" y1="178.2" x2="631" y2="178.2" stroke="#a03030" stroke-width="3"/><line x1="631" y1="176.7" x2="661.5" y2="176.7" stroke="#a03030" stroke-width="3"/><line x1="661.5" y1="174.6" x2="671" y2="174.6" stroke="#a03030" stroke-width="3"/><line x1="671" y1="172.2" x2="810.5" y2="172.2" stroke="#a03030" stroke-width="3"/><line x1="810.5" y1="167.2" x2="821" y2="167.2" stroke="#a03030" stroke-width="3"/><line x1="821" y1="165.8" x2="831" y2="165.8" stroke="#a03030" stroke-width="3"/><line x1="329.5" y1="184.5" x2="925.5" y2="184.5" stroke="#000" stroke-width="1.4"/><line x1="329.5" y1="222.3" x2="925.5" y2="222.3" stroke="#000" stroke-width="1.4"/><line x1="329.5" y1="261.5" x2="925.5" y2="261.5" stroke="#000" stroke-width="1.4"/><line x1="338" y1="220.1" x2="815.5" y2="220.1" stroke="#505050" stroke-width="1.5"/><line x1="338" y1="219.9" x2="796" y2="219.9" stroke="#181878" stroke-width="1.5" stroke-dasharray="1.3 1"/><line x1="815.5" y1="220" x2="830" y2="220" stroke="#c8c8c8" stroke-width="1.4"/><polyline fill="none" stroke="#4040e8" stroke-width="1.5" stroke-dasharray="1.4 1.4" points="795.6,219.2 804.8,194.8 814.5,194.8"/><line x1="334" y1="258.4" x2="500" y2="258.4" stroke="#e83030" stroke-width="1.5"/><rect x="344.5" y="208" width="69" height="13.4" fill="#f5f5f5" fill-opacity="0.92"/><rect x="344.5" y="246" width="76.5" height="14.6" fill="#f5f5f5" fill-opacity="0.92"/></svg>
<div style="left:330px;top:187px;width:8px;height:15.5px;background:#0000e0;"></div>
<span class="t" style="left:330.30px;top:186.83px;font-size:14px;color:#fff;">4</span>
<span class="t" style="left:346.00px;top:62.92px;font-size:15px;color:#000;letter-spacing:0.551px;font-weight:bold;">Pane1:</span>
<span class="t" style="left:346.00px;top:80.42px;font-size:15px;color:#2a2a9a;letter-spacing:0.397px;">ИсточнДанных [RIZ0]</span>
<span class="t" style="left:346.00px;top:97.12px;font-size:15px;color:#207020;letter-spacing:0.568px;">ST (50, 90) [RIZ0]</span>
<span class="t" style="left:346.00px;top:113.42px;font-size:15px;color:#22bb22;letter-spacing:0.515px;">EMA (14, 4, 20, 2, 1) [RIZ0]</span>
<span class="t" style="left:346.00px;top:190.93px;font-size:15px;color:#000;letter-spacing:0.551px;font-weight:bold;">Pane3:</span>
<span class="t" style="left:346.00px;top:207.73px;font-size:15px;color:#000;letter-spacing:0.479px;">ap [RIZ0]</span>
<span class="t" style="left:346.00px;top:223.93px;font-size:15px;color:#d8d8f4;letter-spacing:0.354px;">W [RIZ0]</span>
<span class="t" style="left:346.00px;top:230.12px;font-size:15px;color:#000;letter-spacing:0.551px;font-weight:bold;">Pane2:</span>
<span class="t" style="left:346.00px;top:246.43px;font-size:15px;color:#e02020;letter-spacing:0.481px;">psn [RIZ0]</span>
<span class="t" style="left:356.00px;top:263.93px;font-size:15px;color:#000;letter-spacing:0.492px;">20:00</span>
<span class="t" style="left:466.00px;top:263.93px;font-size:15px;color:#000;letter-spacing:0.492px;">21:00</span>
<div class="clip" style="left:868.8px;top:108px;width:56px;height:5px;background:transparent"><span class="t" style="left:0.8px;top:-9.98px;font-size:15px;color:#000;letter-spacing:0.254px">164&#x27;000</span></div>
<div class="clip" style="left:868.8px;top:62.2px;width:55.5px;height:11px;background:#2020c0"><span class="t" style="left:0.8px;top:0.72px;font-size:15px;color:#fff;letter-spacing:0.254px">164&#x27;885</span></div>
<div class="clip" style="left:868.8px;top:72.4px;width:55.5px;height:16.8px;background:#068006"><span class="t" style="left:0.8px;top:0.02px;font-size:15px;color:#fff;letter-spacing:0.254px">164&#x27;663</span></div>
<div class="clip" style="left:868.8px;top:91.1px;width:55.5px;height:16.8px;background:#06c006"><span class="t" style="left:0.8px;top:-0.17px;font-size:15px;color:#fff;letter-spacing:0.254px">164&#x27;189</span></div>
<div class="clip" style="left:868.8px;top:157px;width:55.5px;height:16px;background:#fdfdfd"><span class="t" style="left:0.8px;top:-0.38px;font-size:15px;color:#a03030;letter-spacing:0.254px">162&#x27;575</span></div>
<div style="left:916px;top:211px;width:8.3px;height:16.5px;background:#000;"></div>
<span class="t" style="left:917.00px;top:211.83px;font-size:14px;color:#fff;font-weight:bold;">1</span>
<div style="left:916px;top:249px;width:8.3px;height:4px;background:#ee1111;"></div>
<div style="left:953px;top:58.3px;width:593px;height:255.7px;background:#f5f5f5;"></div>
<div style="left:1498.3px;top:58.3px;width:47.5px;height:201.7px;background:#d0d0d0;"></div>
<div style="left:953px;top:260px;width:593px;height:34px;background:#d0d0d0;"></div>
<div style="left:953px;top:294px;width:593px;height:20px;background:#e9e7e3;"></div>
<div style="left:1526.5px;top:294.5px;width:19.5px;height:19px;background:#d4d0c8;border:1px solid;border-color:#fff #404040 #404040 #fff;border-left-width:2px;border-top-width:1.6px;box-shadow:inset -1px -1px 0 #808080;"></div>
<svg style="left:1532.5px;top:298.5px" width="8" height="11"><path d="M1 0 L1 11 L7 5.5 Z" fill="#000"/></svg>
<div style="left:1517px;top:294.5px;width:9.5px;height:19px;background:#d4d0c8;border:1px solid;border-color:#fff #404040 #404040 #fff;box-shadow:inset -1px -1px 0 #808080;"></div>
<svg style="left:0;top:0" width="1560" height="330" viewBox="0 0 1560 330"><line x1="980.5" y1="59" x2="980.5" y2="259" stroke="#d0d0d0" stroke-width="1"/><line x1="1171.5" y1="59" x2="1171.5" y2="259" stroke="#d0d0d0" stroke-width="1"/><line x1="1384.5" y1="59" x2="1384.5" y2="259" stroke="#d0d0d0" stroke-width="1"/><line x1="953" y1="59.5" x2="1448" y2="59.5" stroke="#dcdcdc" stroke-width="1"/><line x1="953" y1="140.2" x2="1448" y2="140.2" stroke="#dcdcdc" stroke-width="1"/><line x1="953" y1="220.7" x2="1448" y2="220.7" stroke="#dcdcdc" stroke-width="1"/><line x1="1095.0" y1="124.2" x2="1095.0" y2="138.8" stroke="#0000ff" stroke-width="1.6"/><rect x="1085.8" y="130" width="20" height="5.8" fill="#0000ff"/><line x1="1116.3" y1="134.2" x2="1116.3" y2="145.8" stroke="#0000ff" stroke-width="1.6"/><rect x="1107.1" y="138.7" width="20" height="7.1" fill="#0000ff"/><line x1="1137.5" y1="140" x2="1137.5" y2="147.8" stroke="#0000ff" stroke-width="1.6"/><rect x="1129.2" y="140.9" width="18.2" height="2.9" fill="#f5f5f5" stroke="#0000ff" stroke-width="1.6"/><line x1="1158.8" y1="128" x2="1158.8" y2="140.5" stroke="#0000ff" stroke-width="1.6"/><rect x="1150.5" y="135.9" width="18.2" height="3.7" fill="#f5f5f5" stroke="#0000ff" stroke-width="1.6"/><line x1="1180.0" y1="128" x2="1180.0" y2="149.5" stroke="#0000ff" stroke-width="1.6"/><rect x="1170.8" y="134.7" width="20" height="14.8" fill="#0000ff"/><line x1="1201.3" y1="148.3" x2="1201.3" y2="161.7" stroke="#0000ff" stroke-width="1.6"/><rect x="1192.1" y="148.3" width="20" height="11.4" fill="#0000ff"/><line x1="1223.0" y1="150.3" x2="1223.0" y2="164.2" stroke="#0000ff" stroke-width="1.6"/><rect x="1213.4" y="158.7" width="20" height="3.3" fill="#0000ff"/><line x1="1243.8" y1="156.3" x2="1243.8" y2="171.7" stroke="#0000ff" stroke-width="1.6"/><rect x="1234.6" y="160" width="20" height="2.0" fill="#0000ff"/><line x1="1265.1" y1="160" x2="1265.1" y2="166.7" stroke="#0000ff" stroke-width="1.6"/><rect x="1256.8" y="162.20000000000002" width="18.2" height="3.6" fill="#f5f5f5" stroke="#0000ff" stroke-width="1.6"/><line x1="1286.3" y1="155" x2="1286.3" y2="164.2" stroke="#0000ff" stroke-width="1.6"/><rect x="1278.0" y="157.20000000000002" width="18.2" height="6.1" fill="#f5f5f5" stroke="#0000ff" stroke-width="1.6"/><line x1="1307.6" y1="154" x2="1307.6" y2="168.6" stroke="#0000ff" stroke-width="1.6"/><rect x="1298.4" y="156.2" width="20" height="4.3" fill="#0000ff"/><line x1="1328.9" y1="154" x2="1328.9" y2="165.2" stroke="#0000ff" stroke-width="1.6"/><rect x="1320.6" y="155.9" width="18.2" height="3.7" fill="#f5f5f5" stroke="#0000ff" stroke-width="1.6"/><line x1="1350.1" y1="145.4" x2="1350.1" y2="156.5" stroke="#0000ff" stroke-width="1.6"/><rect x="1340.9" y="154.5" width="20" height="1.5" fill="#0000ff"/><line x1="1371.4" y1="149.2" x2="1371.4" y2="168.6" stroke="#0000ff" stroke-width="1.6"/><rect x="1362.2" y="154.8" width="20" height="10.9" fill="#0000ff"/><line x1="1392.6" y1="102.2" x2="1392.6" y2="151.3" stroke="#0000ff" stroke-width="1.6"/><rect x="1384.3" y="117.60000000000001" width="18.2" height="32.8" fill="#f5f5f5" stroke="#0000ff" stroke-width="1.6"/><line x1="1413.9" y1="99.6" x2="1413.9" y2="116.7" stroke="#0000ff" stroke-width="1.6"/><rect x="1405.6" y="108.60000000000001" width="18.2" height="7.2" fill="#f5f5f5" stroke="#0000ff" stroke-width="1.6"/><line x1="1435.2" y1="104.2" x2="1435.2" y2="116.7" stroke="#0000ff" stroke-width="1.6"/><rect x="1426.0" y="112" width="20" height="4.7" fill="#0000ff"/><path d="M1070 125 L1083.8 125 L1083.8 138.6 L1070 138.6 M1074 138.6 L1074 147.5" fill="none" stroke="#0000ff" stroke-width="1.8"/><path d="M1070 125 L1065.5 125 L1065.5 138.6 L1070 138.6" fill="none" stroke="#0000ff" stroke-width="1.8"/><rect x="1044" y="139.5" width="18.5" height="5.5" fill="none" stroke="#0000ff" stroke-width="1.6"/><rect x="1023" y="131" width="18.5" height="9" fill="none" stroke="#0000ff" stroke-width="1.6"/><rect x="1002" y="133" width="18.5" height="9" fill="none" stroke="#0000ff" stroke-width="1.6"/><rect x="981" y="138" width="18.5" height="5" fill="none" stroke="#0000ff" stroke-width="1.6"/><line x1="1447" y1="116.3" x2="1448" y2="116.3" stroke="#0000ff" stroke-width="1.6"/><line x1="1412" y1="99.6" x2="1417" y2="99.6" stroke="#0000ff" stroke-width="1.4"/><polyline fill="none" stroke="#a0207a" stroke-width="1.25" stroke-dasharray="1.3 1.2" points="1070,124.3 1333.3,124.3 1348.8,127.6 1373,127.6 1393.8,101.8 1416.3,99.8"/><polyline fill="none" stroke="#202090" stroke-width="1.25" stroke-dasharray="1.3 1.2" points="1070.6,123.9 1374.8,123.9 1393.4,101.4 1416.3,99.4"/><polyline fill="none" stroke="#a0207a" stroke-width="1.3" stroke-dasharray="1.3 1.2" points="950,148.9 975,148.9 1010,140 1040,128 1066,124.3"/><line x1="950" y1="142.2" x2="957" y2="142.2" stroke="#202090" stroke-width="1.3" stroke-dasharray="1.3 1.2"/><rect x="957.5" y="62" width="112" height="105" fill="#f5f5f5" fill-opacity="0.88"/><line x1="953" y1="116.7" x2="1384" y2="116.7" stroke="#3838f0" stroke-width="1.2" stroke-dasharray="3.2 1.6"/><polyline fill="none" stroke="#c02828" stroke-width="1.3" stroke-dasharray="1.3 1.2" points="950,183.7 998,182.4 1013,179.8 1101.7,180 1118.3,178.3 1161.7,178.3 1183.3,168.3 1226.7,168.3 1245,171.7 1393.8,171.7"/><line x1="959" y1="183.2" x2="1235.8" y2="183.2" stroke="#a52a2a" stroke-width="3.6"/><line x1="1235.8" y1="179.5" x2="1342" y2="179.5" stroke="#a52a2a" stroke-width="3.2"/><line x1="1342" y1="178.2" x2="1406" y2="178.2" stroke="#a52a2a" stroke-width="2.8"/><line x1="1406" y1="172.2" x2="1427.2" y2="172.2" stroke="#a52a2a" stroke-width="2.8"/><polyline fill="none" stroke="#209090" stroke-width="1.3" stroke-dasharray="1.3 1.2" points="1211.7,181.7 1223.3,180 1235.8,179.6"/><polyline fill="none" stroke="#209090" stroke-width="1.3" stroke-dasharray="1.3 1.2" points="1324.6,179 1376.5,177.8 1392,171.4 1406,171.4"/><circle cx="1265.8" cy="160.8" r="4.8" fill="none" stroke="#ff1010" stroke-width="1.6"/><circle cx="1287.2" cy="160.8" r="4.8" fill="#0000ff"/><path d="M1264.3 135.6 L1270 135.6 L1270 140.6 L1272.6 140.6 L1267.1 146.6 L1261.7 140.6 L1264.3 140.6 Z" fill="#10e010" stroke="#1a4a1a" stroke-width="0.9"/><path d="M1288.3 179.4 L1292.8 188.3 L1283.8 188.3 Z" fill="#f020f0" stroke="#200820" stroke-width="1.2"/><line x1="953" y1="259.5" x2="1547" y2="259.5" stroke="#000" stroke-width="1.4"/></svg>
<span class="t" style="left:959.30px;top:63.72px;font-size:15px;color:#000;letter-spacing:0.567px;font-weight:bold;">Main:</span>
<span class="t" style="left:959.00px;top:79.72px;font-size:15px;color:#2a2a9a;letter-spacing:-0.028px;">LongHigh</span>
<span class="t" style="left:959.00px;top:96.92px;font-size:15px;color:#207878;letter-spacing:-0.127px;">LongLow</span>
<span class="t" style="left:959.00px;top:113.83px;font-size:15px;color:#a02020;letter-spacing:0.079px;">ShortLow</span>
<span class="t" style="left:959.00px;top:130.03px;font-size:15px;color:#782078;letter-spacing:0.200px;">ShortHigh</span>
<span class="t" style="left:959.00px;top:147.23px;font-size:15px;color:#2020f0;letter-spacing:0.235px;">Source1 [SRZ0]</span>
<svg style="left:955px;top:162px" width="26" height="10"><path d="M3.2 3.2 L22.9 3.2 M12.8 3.2 L12.8 6.8" stroke="#0000ff" stroke-width="1.4" fill="none"/></svg>
<div class="clip" style="left:1240px;top:59px;width:60px;height:12px"><span class="t" style="left:6.3px;top:-7.4px;font-size:15px;letter-spacing:0.2px">10387</span></div>
<span class="t" style="left:1182.50px;top:261.43px;font-size:15px;color:#000;letter-spacing:0.492px;">23:00</span>
<div style="left:1265px;top:260.5px;width:45px;height:29px;background:#e8e8e8;"></div>
<span class="t" style="left:1267.00px;top:256.03px;font-size:15px;color:#000;letter-spacing:-0.380px;">SX 1</span>
<span class="t" style="left:1267.00px;top:272.93px;font-size:15px;color:#000;letter-spacing:0.157px;">10387</span>
<span class="t" style="left:1394.50px;top:261.43px;font-size:15px;color:#000;letter-spacing:0.492px;">10:00</span>
<span class="t" style="left:1394.50px;top:278.43px;font-size:15px;color:#000;letter-spacing:0.392px;">02.12.2010</span>
<div class="clip" style="left:1498.8px;top:59px;width:47px;height:6px;background:transparent"><span class="t" style="left:0.8px;top:-10.58px;font-size:15px;color:#000;letter-spacing:0.154px">10&#x27;450</span></div>
<div class="clip" style="left:1498.3px;top:89.6px;width:47.4px;height:16.5px;background:#780878"><span class="t" style="left:1.2px;top:-0.58px;font-size:15px;color:#fff;letter-spacing:0.154px">10&#x27;425</span></div>
<div class="clip" style="left:1498.3px;top:106px;width:47.4px;height:16.8px;background:#0000ff"><span class="t" style="left:1.2px;top:-1.08px;font-size:15px;color:#fff;letter-spacing:0.154px">10&#x27;415</span></div>
<span class="t" style="left:1499.50px;top:129.73px;font-size:15px;color:#000;letter-spacing:0.154px;">10&#x27;400</span>
<div class="clip" style="left:1498.3px;top:162.3px;width:47.4px;height:16.7px;background:#a01010"><span class="t" style="left:1.2px;top:-0.58px;font-size:15px;color:#fff;letter-spacing:0.154px">10&#x27;381</span></div>
<span class="t" style="left:1499.50px;top:212.73px;font-size:15px;color:#000;letter-spacing:0.154px;">10&#x27;350</span>
<div style="left:486.4px;top:252px;width:662.6px;height:470px;background:#d4d0c8;border:1px solid;border-color:#d4d0c8 #404040 #404040 #d4d0c8;box-shadow:inset 1px 1px 0 #fff, inset -1px -1px 0 #808080;"></div>
<div style="left:489.2px;top:254.5px;width:657px;height:23.5px;background:linear-gradient(to right,#0a246a,#a6caf0);"></div>
<div style="left:489.2px;top:278px;width:657px;height:440px;background:#8cf09c;"></div>
<svg style="left:491px;top:256px" width="20" height="20" viewBox="0 0 20 20"><rect width="20" height="20" fill="#2b5570"/><rect x="1" y="11.3" width="3.1" height="5.4" fill="#fff"/><rect x="5.1" y="14.4" width="1.8" height="2.3" fill="#fff"/><rect x="8.5" y="10.6" width="3" height="6.1" fill="#fff"/><rect x="12" y="7.1" width="3.4" height="9.6" fill="#f5c400"/><rect x="16.1" y="12" width="3" height="4.7" fill="#fff"/></svg>
<span class="t" style="left:514.00px;top:258.03px;font-size:15px;color:#fff;letter-spacing:-0.034px;font-weight:bold;">Управление портфелем</span>
<div style="left:1123.2px;top:257px;width:20.8px;height:18.4px;background:#d4d0c8;border:1px solid;border-color:#fff #404040 #404040 #fff;box-shadow:inset -1px -1px 0 #808080;"></div>
<svg style="left:1123.2px;top:257px" width="20.8" height="18.4"><path d="M5.9 4.699999999999999 L14.4 13.2 M14.4 4.699999999999999 L5.9 13.2" stroke="#000" stroke-width="2.2" fill="none"/></svg>
<span class="t" style="left:495.30px;top:286.78px;font-size:13.5px;color:#000;letter-spacing:0.011px;">Ценные бумаги</span>
<div style="left:493px;top:309px;width:546px;height:181px;background:#8cf09c;border:1px solid;border-color:#808080 #fff #fff #808080;border-top-width:1.4px;border-right-width:2px;border-bottom-width:1.6px;box-shadow:inset 1px 1.5px 0 #404040, inset -1px -1px 0 #d4d0c8;"></div>
<div style="left:495px;top:311.5px;width:312px;height:24px;background:#d4d0c8;border:1px solid;border-color:#fff #404040 #404040 #fff;box-shadow:inset -1px -1px 0 #808080;"></div>
<span class="t" style="left:614.30px;top:316.98px;font-size:13.5px;color:#000;letter-spacing:-0.048px;">Инструмент</span>
<div style="left:807.5px;top:311.5px;width:228.5px;height:24px;background:#d4d0c8;border:1px solid;border-color:#fff #404040 #404040 #fff;box-shadow:inset -1px -1px 0 #808080;"></div>
<div style="left:495px;top:336.5px;width:541px;height:16px;background:#d4d0c8;"></div>
<span class="t" style="left:502.70px;top:337.28px;font-size:13.5px;color:#000;letter-spacing:0.039px;">Удаленный инструмент</span>
<span class="t" style="left:502.70px;top:353.98px;font-size:13.5px;color:#000;letter-spacing:0.039px;">Удаленный инструмент</span>
<span class="t" style="left:502.70px;top:370.68px;font-size:13.5px;color:#000;letter-spacing:0.039px;">Удаленный инструмент</span>
<span class="t" style="left:502.70px;top:387.38px;font-size:13.5px;color:#000;letter-spacing:0.039px;">Удаленный инструмент</span>
<div style="left:1046px;top:312.8px;width:94px;height:29px;background:#d4d0c8;border:1px solid;border-color:#fff #404040 #404040 #fff;border-bottom-width:1.6px;border-right-width:1.4px;box-shadow:inset -1px -1.4px 0 #808080, inset 1px 1px 0 #e8e6e2;"></div>
<span class="t" style="left:1062.80px;top:319.98px;font-size:13.5px;color:#000;letter-spacing:-0.045px;">Добавить</span>
<div style="left:1046px;top:348.8px;width:94px;height:29px;background:#d4d0c8;border:1px solid;border-color:#fff #404040 #404040 #fff;border-bottom-width:1.6px;border-right-width:1.4px;box-shadow:inset -1px -1.4px 0 #808080, inset 1px 1px 0 #e8e6e2;"></div>
<span class="t" style="left:1066.30px;top:355.78px;font-size:13.5px;color:#000;letter-spacing:0.108px;">Удалить</span>
<span class="t" style="left:495.30px;top:527.98px;font-size:13.5px;color:#000;letter-spacing:-0.043px;">Скрипты</span>
<div style="left:493px;top:550px;width:546px;height:175px;background:#8cf09c;border:1px solid;border-color:#808080 #fff #fff #808080;border-top-width:1.4px;border-right-width:2px;border-bottom-width:1.6px;box-shadow:inset 1px 1.5px 0 #404040, inset -1px -1px 0 #d4d0c8;"></div>
<div style="left:495px;top:552.5px;width:80.5px;height:24px;background:#d4d0c8;border:1px solid;border-color:#fff #404040 #404040 #fff;box-shadow:inset -1px -1px 0 #808080;"></div>
<span class="t" style="left:513.60px;top:557.78px;font-size:13.5px;color:#000;letter-spacing:-0.033px;">Скрипт</span>
<div style="left:576px;top:552.5px;width:122.5px;height:24px;background:#d4d0c8;border:1px solid;border-color:#fff #404040 #404040 #fff;box-shadow:inset -1px -1px 0 #808080;"></div>
<span class="t" style="left:594.60px;top:557.78px;font-size:13.5px;color:#000;letter-spacing:0.145px;">Торговое имя</span>
<div style="left:699px;top:552.5px;width:155.5px;height:24px;background:#d4d0c8;border:1px solid;border-color:#fff #404040 #404040 #fff;box-shadow:inset -1px -1px 0 #808080;"></div>
<span class="t" style="left:740.20px;top:557.78px;font-size:13.5px;color:#000;letter-spacing:-0.048px;">Инструмент</span>
<div style="left:855px;top:552.5px;width:169.5px;height:24px;background:#d4d0c8;border:1px solid;border-color:#fff #404040 #404040 #fff;box-shadow:inset -1px -1px 0 #808080;"></div>
<span class="t" style="left:885.40px;top:557.78px;font-size:13.5px;color:#000;letter-spacing:-0.027px;">Значение лимита</span>
<div style="left:1025px;top:552.5px;width:11px;height:24px;background:#d4d0c8;border:1px solid;border-color:#fff #404040 #404040 #fff;box-shadow:inset -1px -1px 0 #808080;"></div>
<div style="left:1046px;top:554.2px;width:94px;height:28.8px;background:#d4d0c8;border:1px solid;border-color:#fff #404040 #404040 #fff;border-bottom-width:1.6px;border-right-width:1.4px;box-shadow:inset -1px -1.4px 0 #808080, inset 1px 1px 0 #e8e6e2;"></div>
<span class="t" style="left:1062.80px;top:560.98px;font-size:13.5px;color:#000;letter-spacing:-0.045px;">Добавить</span>
<div style="left:1046px;top:590.2px;width:94px;height:28.8px;background:#d4d0c8;border:1px solid;border-color:#fff #404040 #404040 #fff;border-bottom-width:1.6px;border-right-width:1.4px;box-shadow:inset -1px -1.4px 0 #808080, inset 1px 1px 0 #e8e6e2;"></div>
<span class="t" style="left:1067.00px;top:597.48px;font-size:13.5px;color:#fff;letter-spacing:0.050px;">Править</span>
<span class="t" style="left:1066.00px;top:596.48px;font-size:13.5px;color:#8a8782;letter-spacing:0.050px;">Править</span>
<div style="left:1046px;top:626.2px;width:94px;height:28.8px;background:#d4d0c8;border:1px solid;border-color:#fff #404040 #404040 #fff;border-bottom-width:1.6px;border-right-width:1.4px;box-shadow:inset -1px -1.4px 0 #808080, inset 1px 1px 0 #e8e6e2;"></div>
<span class="t" style="left:1067.30px;top:633.18px;font-size:13.5px;color:#fff;letter-spacing:0.108px;">Удалить</span>
<span class="t" style="left:1066.30px;top:632.18px;font-size:13.5px;color:#8a8782;letter-spacing:0.108px;">Удалить</span>
</body></html>
